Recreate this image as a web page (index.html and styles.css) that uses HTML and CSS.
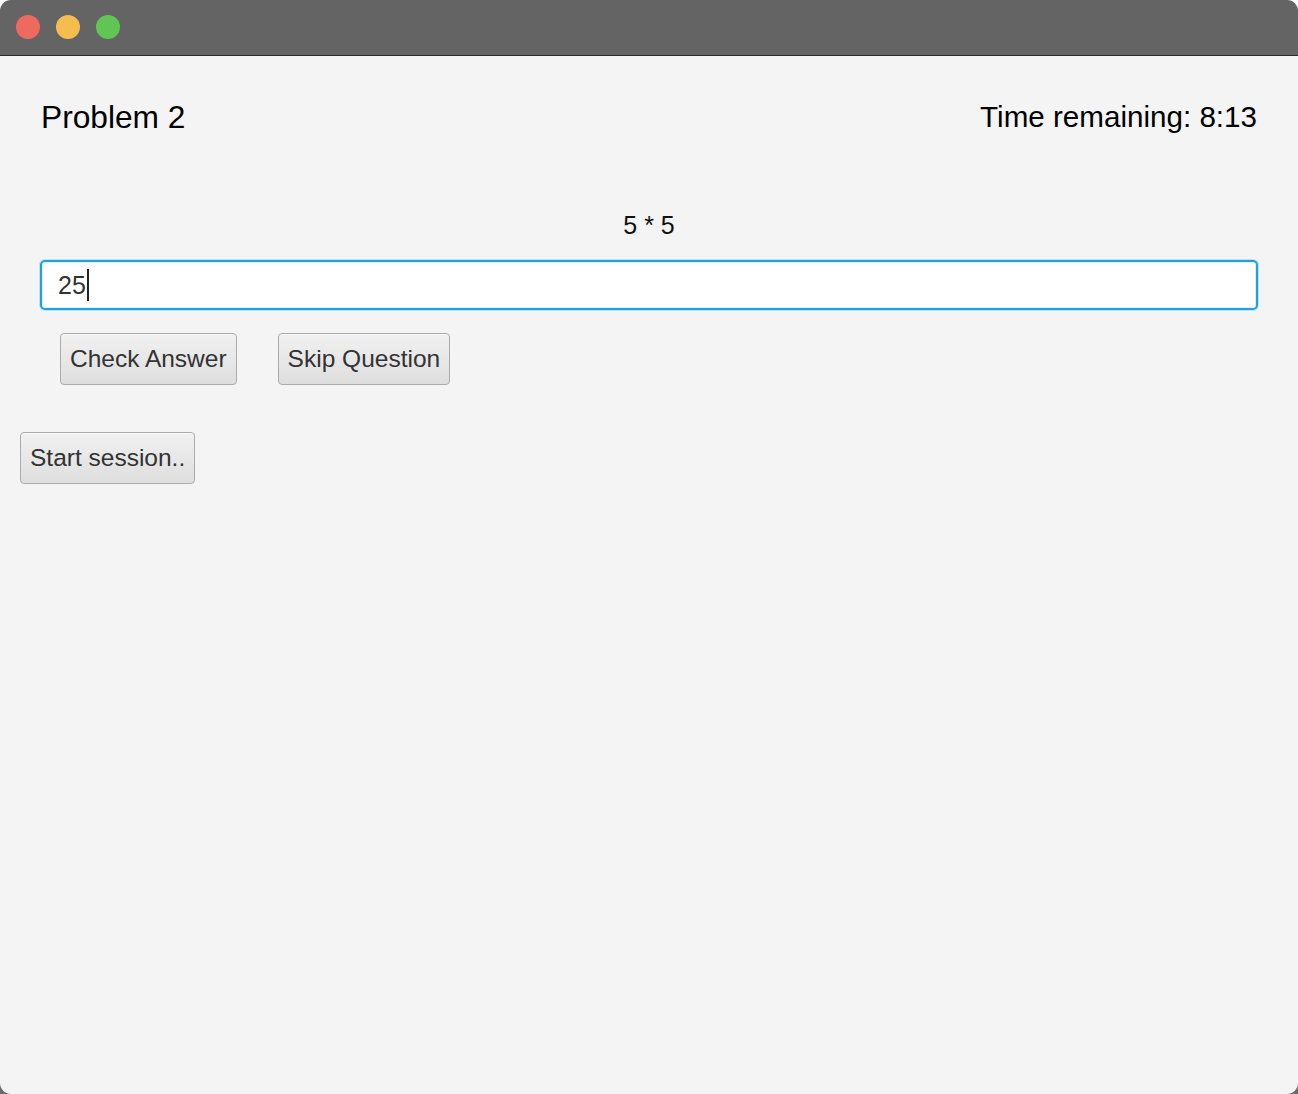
FILE: index.html
```html
<!DOCTYPE html>
<html lang="en">
<head>
<meta charset="utf-8">
<title>Problem 2</title>
<link rel="stylesheet" href="styles.css">
</head>
<body>
<div class="window">
  <div class="titlebar">
    <span class="light red"></span>
    <span class="light yellow"></span>
    <span class="light green"></span>
  </div>
  <div class="content">
    <div class="header">
      <span class="problem">Problem 2</span>
      <span class="timer">Time remaining: 8:13</span>
    </div>
    <div class="question">5 * 5</div>
    <div class="field"><span class="value">25</span><span class="caret"></span></div>
    <div class="actions">
      <button class="btn">Check Answer</button>
      <button class="btn">Skip Question</button>
    </div>
    <div class="session">
      <button class="btn">Start session..</button>
    </div>
  </div>
</div>
</body>
</html>
```
FILE: styles.css
```css
html, body {
  margin: 0;
  padding: 0;
}
body {
  background: linear-gradient(#ffffff 50%, #6a6a6a 50%);
  font-family: "Liberation Sans", Arial, sans-serif;
  width: 1298px;
  height: 1094px;
  overflow: hidden;
}
.window {
  width: 1298px;
  height: 1094px;
  border-radius: 11px;
  overflow: hidden;
  background: #f4f4f4;
  display: flex;
  flex-direction: column;
}
.titlebar {
  height: 55px;
  background: #646464;
  border-bottom: 1px solid #2b2b2b;
  display: flex;
  align-items: center;
  gap: 16px;
  padding-left: 16px;
  box-sizing: content-box;
}
.light {
  width: 24px;
  height: 24px;
  border-radius: 50%;
  margin-top: -1px;
}
.red { background: #ee6a5f; }
.yellow { background: #f5bd4f; }
.green { background: #61c554; }
.content {
  flex: 1;
  display: flex;
  flex-direction: column;
}
.header {
  display: flex;
  justify-content: space-between;
  padding: 44px 41px 0 41px;
  height: 34px;
  line-height: 34px;
  font-size: 31.7px;
  color: #000;
}
.timer {
  font-size: 29.6px;
}
.question {
  margin-top: 76px;
  height: 30px;
  line-height: 30px;
  font-size: 25px;
  text-align: center;
  color: #111;
}
.field {
  margin: 20px 40px 0 40px;
  height: 50px;
  box-sizing: border-box;
  background: #fff;
  border: 2px solid #1fa3dc;
  border-radius: 5px;
  box-shadow: 0 0 0 1px rgba(31, 163, 220, 0.25), inset 0 0 0 1px rgba(31, 163, 220, 0.15);
  display: flex;
  align-items: center;
  padding-left: 16px;
  font-size: 25px;
  color: #333;
}
.caret {
  width: 2px;
  height: 32px;
  background: #222;
  margin-left: 1px;
}
.actions {
  margin-top: 23px;
  padding-left: 60px;
  display: flex;
  gap: 41px;
}
.session {
  margin-top: 47px;
  padding-left: 20px;
  display: flex;
}
.btn {
  height: 52px;
  padding: 0 9px;
  font-family: "Liberation Sans", Arial, sans-serif;
  font-size: 24.5px;
  color: #333;
  border: 1px solid #ababab;
  border-radius: 4px;
  background: linear-gradient(#f1f1f1, #dedede);
  box-shadow: inset 0 1px 0 rgba(255, 255, 255, 0.6);
}
```
